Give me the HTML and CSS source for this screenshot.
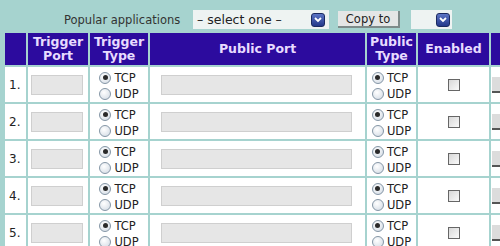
FILE: index.html
```html
<!DOCTYPE html>
<html lang="en">
<head>
    <meta charset="UTF-8">
    <meta name="viewport" content="width=device-width, initial-scale=1.0">
    <title>Port Triggering</title>
    <link rel="stylesheet" href="styles.css">
</head>
<body>

<div class="toolbar">
    <span class="label">Popular applications</span>
    <div class="select select-wide">
        <span class="select-text">&ndash; select one &ndash;</span>
        <span class="arrow"><svg width="8" height="6" viewBox="0 0 8 6"><path d="M1 1 L4 4 L7 1" fill="none" stroke="#fff" stroke-width="1.8"/></svg></span>
    </div>
    <button class="copy-btn">Copy to</button>
    <div class="select select-narrow">
        <span class="arrow"><svg width="8" height="6" viewBox="0 0 8 6"><path d="M1 1 L4 4 L7 1" fill="none" stroke="#fff" stroke-width="1.8"/></svg></span>
    </div>
</div>

<table class="ports">
    <thead>
        <tr>
            <th class="num"></th>
            <th class="col-tport">Trigger<br>Port</th>
            <th class="col-ttype">Trigger<br>Type</th>
            <th class="col-pport">Public Port</th>
            <th class="col-ptype">Public<br>Type</th>
            <th class="col-enabled">Enabled</th>
            <th class="col-extra"></th>
        </tr>
    </thead>
    <tbody id="rows"></tbody>
</table>

<script>
    const rows = document.getElementById('rows');
    const radios = (name) =>
        '<div class="radios">' +
        '<label><input type="radio" name="' + name + '" checked>TCP</label>' +
        '<label><input type="radio" name="' + name + '">UDP</label>' +
        '</div>';

    for (let i = 1; i <= 5; i++) {
        const tr = document.createElement('tr');
        tr.innerHTML =
            '<td class="num">' + i + '.</td>' +
            '<td><input type="text" class="port-short"></td>' +
            '<td>' + radios('tt' + i) + '</td>' +
            '<td><input type="text" class="port-long"></td>' +
            '<td>' + radios('pt' + i) + '</td>' +
            '<td><input type="checkbox" class="check"></td>' +
            '<td class="col-extra"><button class="clear-btn"></button></td>';
        rows.appendChild(tr);
    }
</script>

</body>
</html>
```

FILE: styles.css
```css
body {
    font-family: "DejaVu Sans", Verdana, sans-serif;
    background-color: #a6d3cf;
    margin: 0;
    overflow: hidden;
    width: 500px;
}

.toolbar {
    display: flex;
    align-items: center;
    height: 31px;
    box-sizing: border-box;
    padding-top: 8px;
    padding-left: 64px;
    font-size: 11.5px;
    color: #333;
}

.label {
    width: 118px;
    margin-right: 11px;
    white-space: nowrap;
}

.select {
    display: flex;
    align-items: center;
    justify-content: space-between;
    height: 19px;
    background-color: #eef3f2;
    box-sizing: border-box;
    padding: 0 4px 0 4px;
}

.select-wide {
    width: 136px;
}

.select-narrow {
    width: 41px;
    margin-left: 11px;
    justify-content: flex-end;
    padding-right: 2px;
}

.select-text {
    font-size: 12.5px;
    color: #222;
    white-space: nowrap;
}

.arrow {
    display: flex;
    align-items: center;
    justify-content: center;
    width: 14px;
    height: 14px;
    border-radius: 3px;
    background: linear-gradient(#5c74c4, #23388a);
    border: 1px solid #1b2960;
    box-sizing: border-box;
}

.copy-btn {
    width: 62px;
    height: 17px;
    margin-left: 9px;
    padding: 0;
    font-family: inherit;
    font-size: 11.5px;
    color: #222;
    background-color: #e4e6e6;
    border: none;
    border-right: 2px solid #7d8b8a;
    border-bottom: 2px solid #7d8b8a;
    box-sizing: border-box;
}

.ports {
    margin-left: 3px;
    border-spacing: 2px;
    table-layout: fixed;
    width: 550px;
}

.ports th {
    background-color: #2c0b9e;
    color: #e8dcff;
    font-size: 12.5px;
    font-weight: bold;
    line-height: 14px;
    height: 32px;
    padding: 0;
    text-align: center;
}

.ports td {
    background-color: #fff;
    height: 35px;
    padding: 0;
    text-align: center;
    font-size: 12px;
    color: #222;
}

.num { width: 21px; }
.col-tport { width: 60px; }
.col-ttype { width: 58px; }
.col-pport { width: 215px; }
.col-ptype { width: 49px; }
.col-enabled { width: 71px; }
.col-extra { width: 60px; }

.ports td.num {
    text-align: left;
    padding-left: 4px;
    box-sizing: border-box;
}

.port-short,
.port-long {
    height: 20px;
    box-sizing: border-box;
    background-color: #e6e6e6;
    border: 1px solid #cfcfcf;
    padding: 0;
    margin: 0;
    vertical-align: middle;
}

.port-short {
    width: 52px;
    margin-right: 2px;
}

.port-long {
    width: 191px;
    margin-right: 2px;
}

.radios {
    display: inline-block;
    text-align: left;
    font-size: 11.5px;
    line-height: 16px;
    vertical-align: middle;
    padding-top: 2px;
}

.radios label {
    display: flex;
    align-items: center;
}

.radios input {
    appearance: none;
    width: 12px;
    height: 12px;
    margin: 0 3px 0 0;
    border-radius: 50%;
    border: 1px solid #8496a6;
    background: radial-gradient(circle at 40% 35%, #fff, #cfd8e2);
    box-sizing: border-box;
    position: relative;
}

.radios input:checked::after {
    content: "";
    position: absolute;
    left: 2.5px;
    top: 2.5px;
    width: 5px;
    height: 5px;
    border-radius: 50%;
    background-color: #2a2a2a;
}

.check {
    appearance: none;
    width: 12px;
    height: 12px;
    margin: 0;
    border: 1px solid #666;
    background: linear-gradient(135deg, #d8d8d8, #fafafa);
    box-sizing: border-box;
    vertical-align: middle;
}

.ports td.col-extra {
    text-align: left;
}

.clear-btn {
    width: 50px;
    height: 16px;
    margin-left: 1px;
    margin-top: 1px;
    border: none;
    border-bottom: 2px solid #555;
    background-color: #dcdcdc;
    vertical-align: middle;
}
```
